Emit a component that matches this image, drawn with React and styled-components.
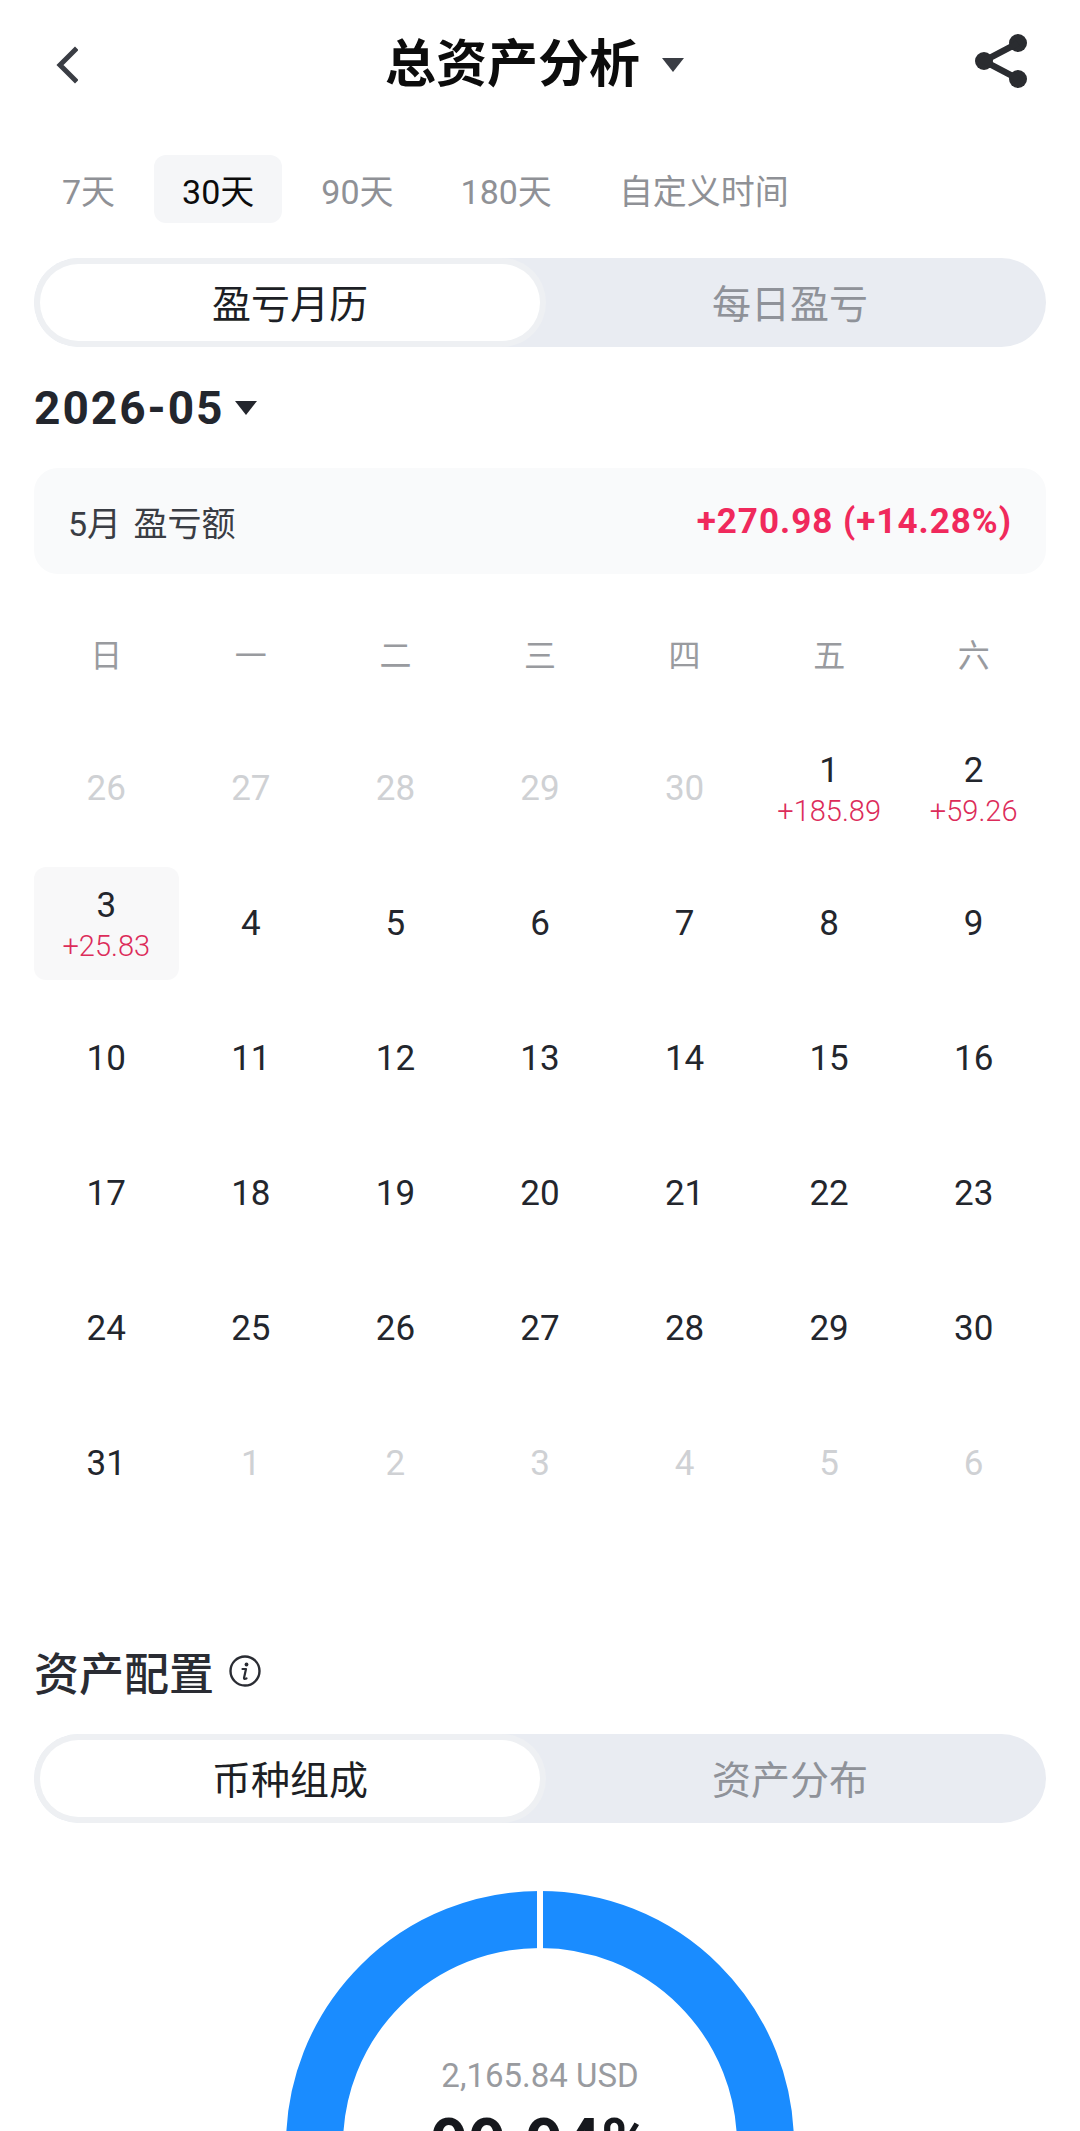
import styled, { createGlobalStyle } from 'styled-components';

const GlobalStyle = createGlobalStyle`
  html, body {
    margin: 0;
    padding: 0;
    background: #fff;
    font-family: Roboto, "Noto Sans CJK SC", sans-serif;
  }
`;

const Page = styled.div`
  width: 1080px;
  height: 2131px;
  overflow: hidden;
  background: #fff;
  color: #23262d;
`;

const Header = styled.header`
  height: 130px;
  display: flex;
  align-items: center;
  justify-content: space-between;
  padding: 0 53px 0 54px;
`;

const HeaderTitle = styled.div`
  display: flex;
  align-items: center;
  gap: 22px;
  margin-left: 16px;
`;

const TitleText = styled.h1`
  margin: 0;
  font-size: 51px;
  line-height: 60px;
  font-weight: 700;
  color: #0c0c0c;
`;

const Caret = styled.span`
  width: 0;
  height: 0;
  border-left: ${(p) => p.$size}px solid transparent;
  border-right: ${(p) => p.$size}px solid transparent;
  border-top: ${(p) => p.$size * 1.3}px solid ${(p) => p.$color || '#23262d'};
`;

const ShareSvg = styled.svg`
  margin-bottom: 8px;
`;

const Ranges = styled.nav`
  display: flex;
  align-items: center;
  gap: 11px;
  height: 68px;
  margin-top: 25px;
  padding-left: 34px;
`;

const Range = styled.span`
  height: 68px;
  display: flex;
  align-items: center;
  padding: 0 28px;
  border-radius: 12px;
  font-size: 34px;
  color: ${(p) => (p.$active ? '#0c0c0c' : '#8f9196')};
  background: ${(p) => (p.$active ? '#f5f6f8' : 'transparent')};
`;

const Segment = styled.div`
  display: flex;
  height: 89px;
  box-sizing: border-box;
  margin: ${(p) => p.$margin};
  padding: 6px;
  border-radius: 45px;
  overflow: hidden;
  background: #e9ecf2;
`;

const SegmentItem = styled.div`
  flex: 1;
  display: flex;
  align-items: center;
  justify-content: center;
  padding-bottom: 4px;
  border-radius: 39px;
  font-size: 39px;
  font-weight: 400;
  color: ${(p) => (p.$active ? '#1d1f25' : '#8f9299')};
  background: ${(p) => (p.$active ? '#fff' : 'transparent')};
  box-shadow: ${(p) => (p.$active ? '0 0 0 6px #eef0f3' : 'none')};
`;

const Month = styled.div`
  display: flex;
  align-items: center;
  gap: 11px;
  margin: 33px 34px 0;
  height: 56px;
  font-size: 46px;
  font-weight: 700;
  letter-spacing: 2px;
`;

const Summary = styled.div`
  display: flex;
  align-items: center;
  justify-content: space-between;
  height: 106px;
  margin: 32px 34px 0;
  padding: 0 34px;
  border-radius: 24px;
  background: #f9fafb;
  font-size: 34px;
`;

const SummaryLabel = styled.span`
  color: #3a3d44;
  word-spacing: 4px;
`;

const SummaryValue = styled.span`
  color: #f0295c;
  font-size: 35px;
  font-weight: 700;
  letter-spacing: 1px;
`;

const CalendarGrid = styled.div`
  display: grid;
  grid-template-columns: repeat(7, 1fr);
  margin: 0 34px;
`;

const Weekday = styled.div`
  display: flex;
  align-items: center;
  justify-content: center;
  height: 158px;
  font-size: 32px;
  color: #999b9f;
`;

const Day = styled.div`
  display: flex;
  flex-direction: column;
  align-items: center;
  justify-content: center;
  height: 113px;
  margin-bottom: 22px;
  border-radius: 12px;
  background: ${(p) => (p.$selected ? '#f8f8f9' : 'transparent')};
  color: ${(p) => (p.$muted ? '#cfd1d4' : '#23262d')};
  font-size: 35px;
  line-height: 42px;
`;

const Profit = styled.span`
  margin-top: 2px;
  font-size: 29px;
  font-weight: 300;
  line-height: 34px;
  color: #dc2c5a;
`;

const SectionTitle = styled.div`
  display: flex;
  align-items: center;
  gap: 15px;
  margin: 99px 34px 0;
  height: 60px;
  font-size: 45px;
  font-weight: 500;
  color: #2a2c33;
`;

const Donut = styled.div`
  position: relative;
  width: 508px;
  height: 508px;
  margin: 68px auto 0;
`;

const DonutCenter = styled.div`
  position: absolute;
  inset: 0;
  display: flex;
  flex-direction: column;
  align-items: center;
  padding-top: 165px;
`;

const DonutAmount = styled.div`
  font-size: 33px;
  line-height: 40px;
  color: #999b9f;
`;

const DonutPercent = styled.div`
  margin-top: 10px;
  font-size: 66px;
  line-height: 76px;
  font-weight: 700;
  color: #16181d;
`;

const weekdays = ['日', '一', '二', '三', '四', '五', '六'];

const days = [
  ...[26, 27, 28, 29, 30].map((d) => ({ label: d, muted: true })),
  { label: 1, profit: '+185.89' },
  { label: 2, profit: '+59.26' },
  { label: 3, profit: '+25.83', selected: true },
  ...Array.from({ length: 28 }, (_, i) => ({ label: i + 4 })),
  ...[1, 2, 3, 4, 5, 6].map((d) => ({ label: d, muted: true })),
];

const ranges = ['7天', '30天', '90天', '180天', '自定义时间'];

const BackIcon = () => (
  <svg width="24" height="40" viewBox="0 0 24 40" fill="none">
    <path d="M21 5 L6 20 L21 35" stroke="#3a3d44" strokeWidth="5" strokeLinecap="square" />
  </svg>
);

const ShareIcon = () => (
  <ShareSvg width="52" height="54" viewBox="0 0 52 54" fill="#2a2c30">
    <circle cx="43" cy="9" r="9" />
    <circle cx="9" cy="27" r="9" />
    <circle cx="43" cy="45" r="9" />
    <path d="M43 9 L9 27 L43 45" fill="none" stroke="#2a2c30" strokeWidth="6.5" />
  </ShareSvg>
);

const InfoIcon = () => (
  <svg width="32" height="32" viewBox="0 0 32 32" fill="none">
    <circle cx="16" cy="16" r="14.5" stroke="#2a2c33" strokeWidth="2.4" />
    <circle cx="17.5" cy="9.5" r="1.9" fill="#2a2c33" />
    <path d="M13.5 14 H17 L15 23 Q14.8 24.5 17.5 23.5" stroke="#2a2c33" strokeWidth="2.2" strokeLinecap="round" strokeLinejoin="round" />
  </svg>
);

const DonutRing = () => (
  <svg width="508" height="508" viewBox="0 0 508 508">
    <circle cx="254" cy="254" r="225.5" fill="none" stroke="#1a8cff" strokeWidth="57" />
    <rect x="251" y="0" width="6" height="60" fill="#fff" />
  </svg>
);

const App = () => (
  <Page>
    <GlobalStyle />
    <Header>
      <BackIcon />
      <HeaderTitle>
        <TitleText>总资产分析</TitleText>
        <Caret $size={11} $color="#3a3d44" />
      </HeaderTitle>
      <ShareIcon />
    </Header>
    <Ranges>
      {ranges.map((r) => (
        <Range key={r} $active={r === '30天'}>{r}</Range>
      ))}
    </Ranges>
    <Segment $margin="35px 34px 0">
      <SegmentItem $active>盈亏月历</SegmentItem>
      <SegmentItem>每日盈亏</SegmentItem>
    </Segment>
    <Month>
      2026-05
      <Caret $size={11} />
    </Month>
    <Summary>
      <SummaryLabel>5月 盈亏额</SummaryLabel>
      <SummaryValue>+270.98 (+14.28%)</SummaryValue>
    </Summary>
    <CalendarGrid>
      {weekdays.map((w) => (
        <Weekday key={w}>{w}</Weekday>
      ))}
      {days.map((d, i) => (
        <Day key={i} $muted={d.muted} $selected={d.selected}>
          {d.label}
          {d.profit && <Profit>{d.profit}</Profit>}
        </Day>
      ))}
    </CalendarGrid>
    <SectionTitle>
      资产配置
      <InfoIcon />
    </SectionTitle>
    <Segment $margin="33px 34px 0">
      <SegmentItem $active>币种组成</SegmentItem>
      <SegmentItem>资产分布</SegmentItem>
    </Segment>
    <Donut>
      <DonutRing />
      <DonutCenter>
        <DonutAmount>2,165.84 USD</DonutAmount>
        <DonutPercent>99.94%</DonutPercent>
      </DonutCenter>
    </Donut>
  </Page>
);

export default App;
